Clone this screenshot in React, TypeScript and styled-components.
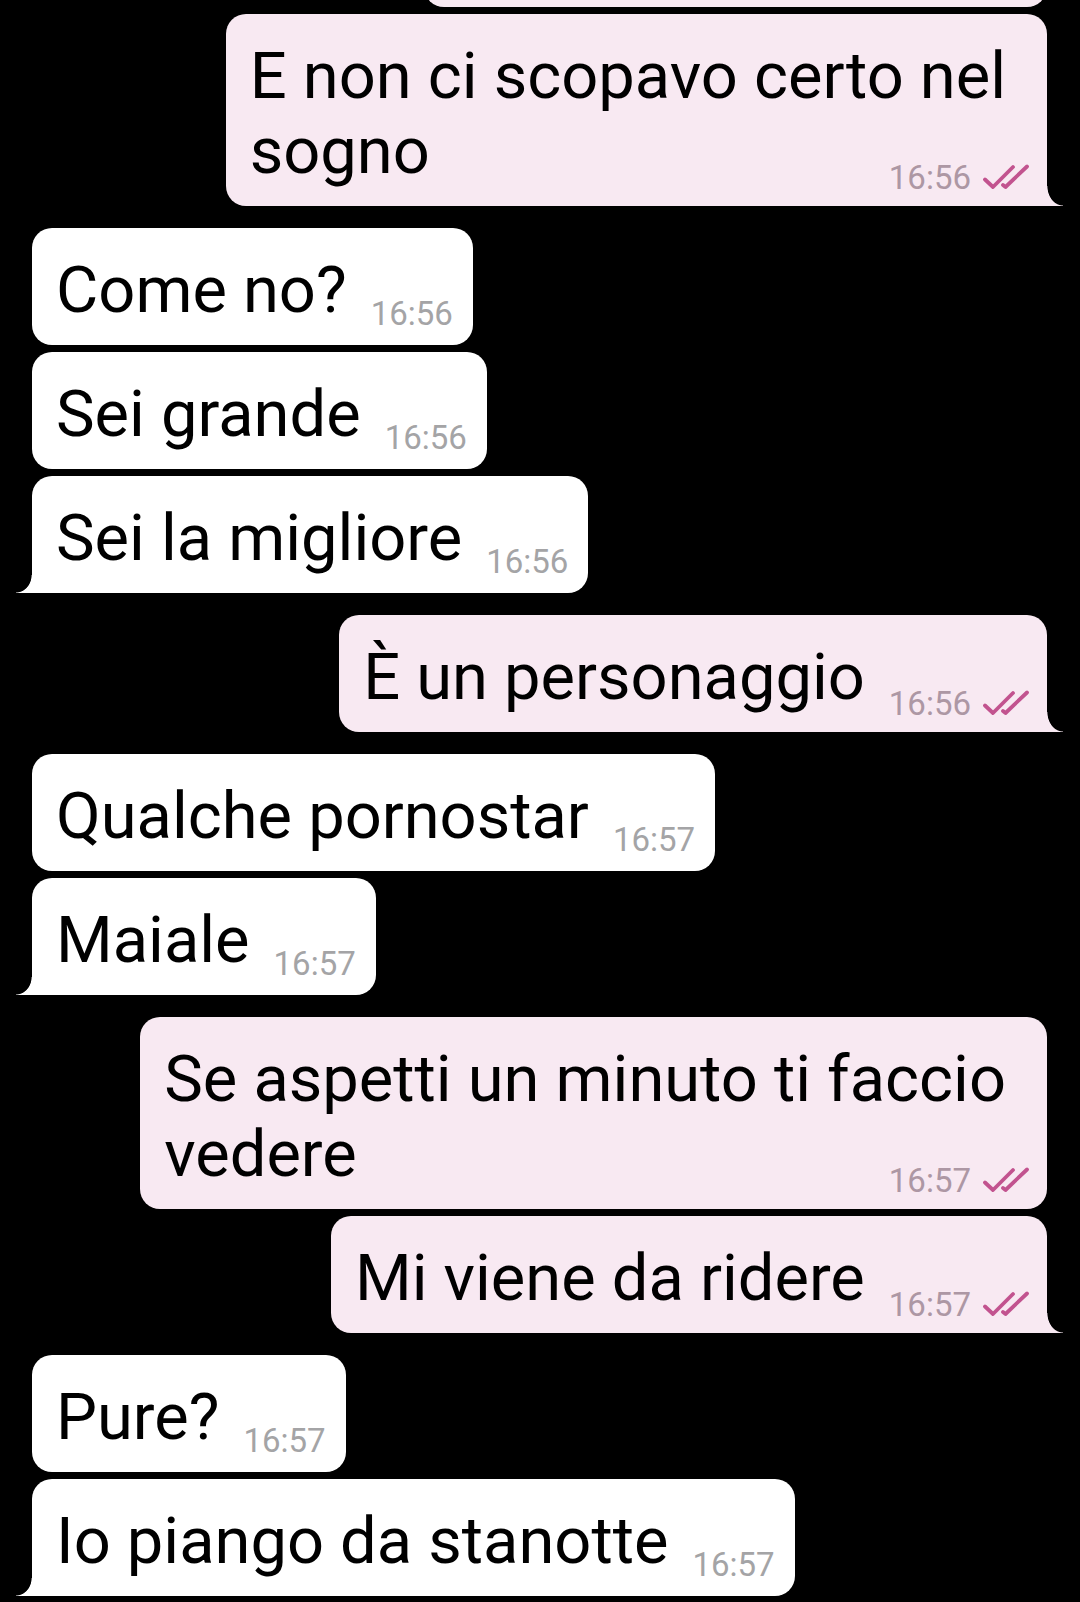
import React from "react";
import styled, { createGlobalStyle, css } from "styled-components";

const GlobalStyle = createGlobalStyle`
  html, body {
    margin: 0;
    padding: 0;
    background: #000;
  }
  body {
    font-family: Roboto, "Noto Sans", "Liberation Sans", sans-serif;
    overflow: hidden;
    -webkit-font-smoothing: antialiased;
  }
`;

const SENT_BG = "#f8e9f2";
const RECV_BG = "#ffffff";
const TICK = "#c2538f";

const Screen = styled.div`
  width: 1080px;
  height: 1602px;
  overflow: hidden;
  background: #000;
`;

const Thread = styled.div`
  display: flex;
  flex-direction: column;
  gap: 22px;
  margin-top: -110px;
  padding: 0 33px 0 32px;
`;

const Group = styled.div<{ $out: boolean }>`
  display: flex;
  flex-direction: column;
  align-items: ${(p) => (p.$out ? "flex-end" : "flex-start")};
  gap: 7px;
`;

const Bubble = styled.div<{ $out: boolean; $tail?: boolean; $stacked?: boolean }>`
  position: relative;
  box-sizing: border-box;
  background: ${(p) => (p.$out ? SENT_BG : RECV_BG)};
  border-radius: 20px;
  padding: 25px ${(p) => (p.$out ? 18 : 20)}px 12px 24px;
  ${(p) =>
    p.$stacked
      ? css`
          display: grid;
          & > * {
            grid-area: 1 / 1;
          }
        `
      : css`
          display: flex;
          align-items: flex-end;
          gap: 24px;
        `}
  ${(p) =>
    p.$tail &&
    (p.$out
      ? css`
          border-bottom-right-radius: 0;
          &::after {
            content: "";
            position: absolute;
            right: -16px;
            bottom: 0;
            width: 16px;
            height: 20px;
            background: radial-gradient(16px 20px at 100% 0, transparent 95%, ${SENT_BG} 100%);
          }
        `
      : css`
          border-bottom-left-radius: 0;
          &::after {
            content: "";
            position: absolute;
            left: -16px;
            bottom: 0;
            width: 16px;
            height: 18px;
            background: radial-gradient(16px 18px at 0 0, transparent 95%, ${RECV_BG} 100%);
          }
        `)}
`;

const PartialBubble = styled(Bubble)`
  width: 623px;
  height: 117px;
`;

const Text = styled.div<{ $stacked?: boolean }>`
  font-size: 65px;
  line-height: 75px;
  color: #000;
  white-space: nowrap;
  margin-bottom: 5px;
  padding-right: ${(p) => (p.$stacked ? 23 : 0)}px;
`;

const Meta = styled.div<{ $out: boolean }>`
  display: flex;
  align-items: flex-end;
  gap: 12px;
  justify-self: end;
  align-self: end;
  font-size: 33px;
  line-height: 32px;
  white-space: nowrap;
  color: ${(p) => (p.$out ? "#ad97a4" : "#a4a4a6")};
  margin-bottom: ${(p) => (p.$out ? 0 : 3)}px;
`;

const Ticks = styled.svg`
  width: 46px;
  height: 25px;
  flex: none;
  margin-bottom: 5px;
`;

const DoubleTick = () => (
  <Ticks viewBox="0 0 46 25" fill="none">
    <path
      d="M2 15.5 L10 23 L30 3"
      stroke={TICK}
      strokeWidth="3.8"
      strokeLinecap="round"
      strokeLinejoin="round"
    />
    <path
      d="M20 21 L22.5 23 L44 2.5"
      stroke={TICK}
      strokeWidth="3.8"
      strokeLinecap="round"
      strokeLinejoin="round"
    />
  </Ticks>
);

type Msg = { lines: string[]; time: string; tail?: boolean };
type Grp = { out: boolean; msgs: Msg[] };

const groups: Grp[] = [
  {
    out: true,
    msgs: [
      { lines: ["E non ci scopavo certo nel", "sogno"], time: "16:56", tail: true },
    ],
  },
  {
    out: false,
    msgs: [
      { lines: ["Come no?"], time: "16:56" },
      { lines: ["Sei grande"], time: "16:56" },
      { lines: ["Sei la migliore"], time: "16:56", tail: true },
    ],
  },
  {
    out: true,
    msgs: [{ lines: ["È un personaggio"], time: "16:56", tail: true }],
  },
  {
    out: false,
    msgs: [
      { lines: ["Qualche pornostar"], time: "16:57" },
      { lines: ["Maiale"], time: "16:57", tail: true },
    ],
  },
  {
    out: true,
    msgs: [
      { lines: ["Se aspetti un minuto ti faccio", "vedere"], time: "16:57" },
      { lines: ["Mi viene da ridere"], time: "16:57", tail: true },
    ],
  },
  {
    out: false,
    msgs: [
      { lines: ["Pure?"], time: "16:57" },
      { lines: ["Io piango da stanotte"], time: "16:57", tail: true },
    ],
  },
];

export default function App() {
  return (
    <Screen>
      <GlobalStyle />
      <Thread>
        {groups.map((g, gi) => (
          <Group key={gi} $out={g.out}>
            {gi === 0 && <PartialBubble $out aria-hidden="true" />}
            {g.msgs.map((m, mi) => {
              const stacked = m.lines.length > 1;
              return (
                <Bubble key={mi} $out={g.out} $tail={m.tail} $stacked={stacked}>
                  <Text $stacked={stacked}>
                    {m.lines.map((l, li) => (
                      <React.Fragment key={li}>
                        {li > 0 && <br />}
                        {l}
                      </React.Fragment>
                    ))}
                  </Text>
                  <Meta $out={g.out}>
                    <span>{m.time}</span>
                    {g.out && <DoubleTick />}
                  </Meta>
                </Bubble>
              );
            })}
          </Group>
        ))}
      </Thread>
    </Screen>
  );
}
